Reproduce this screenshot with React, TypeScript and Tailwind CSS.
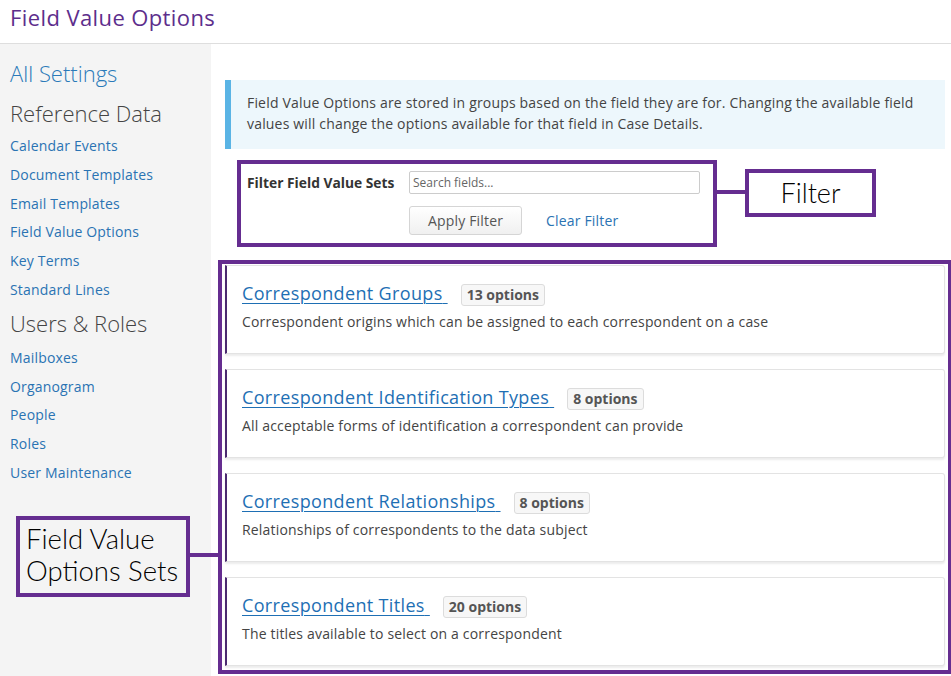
import React from "react";

const font = { fontFamily: '"Open Sans", "Liberation Sans", sans-serif' };

const refLinks = [
  "Calendar Events",
  "Document Templates",
  "Email Templates",
  "Field Value Options",
  "Key Terms",
  "Standard Lines",
];
const userLinks = ["Mailboxes", "Organogram", "People", "Roles", "User Maintenance"];

const sets = [
  { title: "Correspondent Groups", count: "13 options", desc: "Correspondent origins which can be assigned to each correspondent on a case" },
  { title: "Correspondent Identification Types", count: "8 options", desc: "All acceptable forms of identification a correspondent can provide" },
  { title: "Correspondent Relationships", count: "8 options", desc: "Relationships of correspondents to the data subject" },
  { title: "Correspondent Titles", count: "20 options", desc: "The titles available to select on a correspondent" },
];

export default function App() {
  return (
    <div className="relative w-[951px] h-[676px] overflow-hidden bg-white" style={font}>
      <div className="h-[44px] border-b border-[#dedede] pl-[10px] pt-[1px]">
        <h1 className="text-[22px] leading-[32px] tracking-[0.4px] text-[#5d2e8c]">Field Value Options</h1>
      </div>
      <div className="flex h-[632px]">
        <aside className="w-[211px] shrink-0 bg-[#f4f4f4] pl-[10px] pt-[14px]">
          <div className="text-[22px] font-light leading-[30px] text-[#2a7ab9]">All Settings</div>
          <div className="mt-[10px] text-[22px] font-light leading-[30px] text-[#444]">Reference Data</div>
          <ul className="mt-[3px]">
            {refLinks.map((l) => (
              <li key={l} className="h-[28.8px] text-[14px] leading-[29px] tracking-[0.18px] text-[#2a73b3]">{l}</li>
            ))}
          </ul>
          <div className="mt-[4px] text-[22px] font-light leading-[30px] text-[#444]">Users &amp; Roles</div>
          <ul className="mt-[5px]">
            {userLinks.map((l) => (
              <li key={l} className="h-[28.75px] text-[14px] leading-[29px] tracking-[0.18px] text-[#2a73b3]">{l}</li>
            ))}
          </ul>
        </aside>
        <main className="flex-1 pl-[14px] pr-[6px] pt-[36px]">
          <div className="h-[69px] border-l-[6px] border-[#5ab4e5] bg-[#edf7fc] pl-[16px] pt-[12px] text-[14px] leading-[21px] tracking-[0.18px] text-[#444]">
            Field Value Options are stored in groups based on the field they are for. Changing the available field
            <br />
            values will change the options available for that field in Case Details.
          </div>
          <div className="mt-[22px] flex pl-[22px]">
            <div className="w-[162px] pt-[1px] text-[13.8px] font-bold leading-[22px] text-[#333]">Filter Field Value Sets</div>
            <div className="flex flex-col">
              <div className="h-[23px] w-[291px] rounded-[2px] border border-[#cccccc] bg-white px-[3px] text-[12px] leading-[21px] text-[#666]">
                Search fields...
              </div>
              <div className="mt-[12px] flex items-center">
                <div className="h-[29px] w-[113px] rounded-[3px] border border-[#d5d5d5] bg-gradient-to-b from-white to-[#f0f0f0] text-center text-[14px] leading-[27px] tracking-[0.18px] text-[#555]">
                  Apply Filter
                </div>
                <div className="ml-[24px] text-[14px] tracking-[0.18px] text-[#2a73b3]">Clear Filter</div>
              </div>
            </div>
          </div>
          <div className="mt-[30px] flex flex-col gap-[15px]">
            {sets.map((s) => (
              <div
                key={s.title}
                className="h-[89px] rounded-r-[3px] border border-l-[2px] border-[#e3e3e3] border-l-[#4b2a70] bg-white pl-[15px] pt-[14px] shadow-[0_2px_2px_rgba(0,0,0,0.08)]"
              >
                <div className="flex items-center">
                  <span className="text-[18px] leading-[26px] tracking-[0.35px] text-[#1e6fb4] underline decoration-1 underline-offset-[3px]">
                    {s.title}&nbsp;
                  </span>
                  <span className="ml-[13px] mt-[3px] h-[22px] rounded-[3px] border border-[#dcdcdc] bg-[#f7f7f7] px-[5px] text-[14px] font-bold leading-[20px] text-[#555]">
                    {s.count}
                  </span>
                </div>
                <div className="mt-[6px] text-[14px] leading-[20px] tracking-[0.18px] text-[#444]">{s.desc}</div>
              </div>
            ))}
          </div>
        </main>
      </div>

      {/* annotations */}
      <div className="absolute left-[237px] top-[160px] h-[87px] w-[480px] border-4 border-[#652d90]" />
      <div className="absolute left-[716px] top-[190px] h-[4px] w-[30px] bg-[#652d90]" />
      <div
        className="absolute left-[745px] top-[169px] flex h-[48px] w-[131px] items-center justify-center border-4 border-[#652d90] bg-white text-[27px] font-light text-black"
        style={{ fontFamily: 'Lato, "Liberation Sans", sans-serif' }}
      >
        Filter
      </div>
      <div className="absolute left-[218px] top-[260px] h-[414px] w-[734px] border-4 border-[#652d90]" />
      <div className="absolute left-[189px] top-[553px] h-[4px] w-[30px] bg-[#652d90]" />
      <div
        className="absolute left-[16px] top-[516px] h-[81px] w-[174px] border-4 border-[#652d90] pl-[6px] pt-[3px] text-[27.5px] font-light leading-[32px] text-black"
        style={{ fontFamily: 'Lato, "Liberation Sans", sans-serif' }}
      >
        Field Value
        <br />
        Options Sets
      </div>
    </div>
  );
}
